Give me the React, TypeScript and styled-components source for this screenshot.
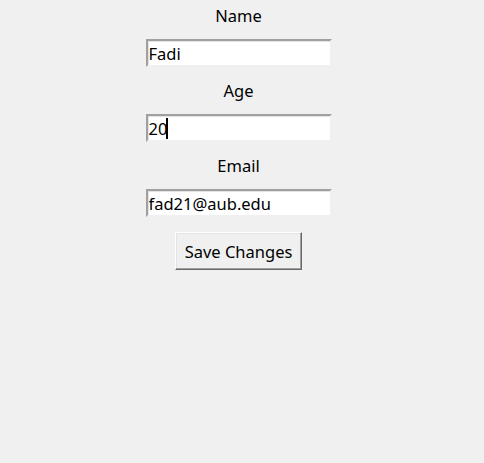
import React, { useState } from "react";
import styled, { createGlobalStyle } from "styled-components";

const GlobalStyle = createGlobalStyle`
  html, body {
    margin: 0;
    padding: 0;
    background: #f0f0f0;
  }
  body {
    font-family: "Noto Sans", "Open Sans", sans-serif;
  }
`;

const Window = styled.div`
  width: 484px;
  height: 463px;
  background: #f0f0f0;
  display: flex;
  flex-direction: column;
  align-items: center;
  padding: 5px 7px 0 0;
  box-sizing: border-box;
`;

const Field = styled.div<{ $first?: boolean }>`
  display: flex;
  flex-direction: column;
  align-items: center;
  margin-top: ${(p) => (p.$first ? "0" : "13px")};
`;

const Label = styled.label`
  font-size: 16.5px;
  line-height: 21px;
  height: 21px;
  color: #000;
  margin-bottom: 13px;
`;

const EntryBox = styled.div`
  position: relative;
`;

const Entry = styled.input`
  display: block;
  width: 186px;
  height: 28px;
  box-sizing: border-box;
  margin: 0;
  padding: 0 1px;
  font-family: "Noto Sans", "Open Sans", sans-serif;
  font-size: 16.5px;
  color: #000;
  background: #fff;
  border-style: solid;
  border-width: 2px;
  border-color: #a0a0a0 #f0f0f0 #f0f0f0 #a0a0a0;
  box-shadow: inset 1px 1px 0 #e3e3e3;
  outline: none;
  caret-color: transparent;
`;

const Caret = styled.span<{ $left: number }>`
  position: absolute;
  top: 4px;
  left: ${(p) => p.$left}px;
  width: 2px;
  height: 21px;
  background: #000;
  pointer-events: none;
`;

const Button = styled.button`
  margin-top: 15px;
  width: 127px;
  height: 38px;
  box-sizing: border-box;
  padding: 0;
  font-family: "Noto Sans", "Open Sans", sans-serif;
  font-size: 16.5px;
  color: #000;
  background: #f0f0f0;
  border-style: solid;
  border-width: 1px;
  border-color: #ffffff #696969 #696969 #ffffff;
  box-shadow: inset -1px -1px 0 #a0a0a0, inset 1px 1px 0 #e3e3e3;
  cursor: default;
`;

export default function App() {
  const [name, setName] = useState("Fadi");
  const [age, setAge] = useState("20");
  const [email, setEmail] = useState("fad21@aub.edu");

  return (
    <>
      <GlobalStyle />
      <Window>
        <Field $first>
          <Label>Name</Label>
          <EntryBox>
            <Entry value={name} onChange={(e) => setName(e.target.value)} />
          </EntryBox>
        </Field>
        <Field>
          <Label>Age</Label>
          <EntryBox>
            <Entry value={age} onChange={(e) => setAge(e.target.value)} />
            <Caret $left={20} />
          </EntryBox>
        </Field>
        <Field>
          <Label>Email</Label>
          <EntryBox>
            <Entry value={email} onChange={(e) => setEmail(e.target.value)} />
          </EntryBox>
        </Field>
        <Button>Save Changes</Button>
      </Window>
    </>
  );
}
